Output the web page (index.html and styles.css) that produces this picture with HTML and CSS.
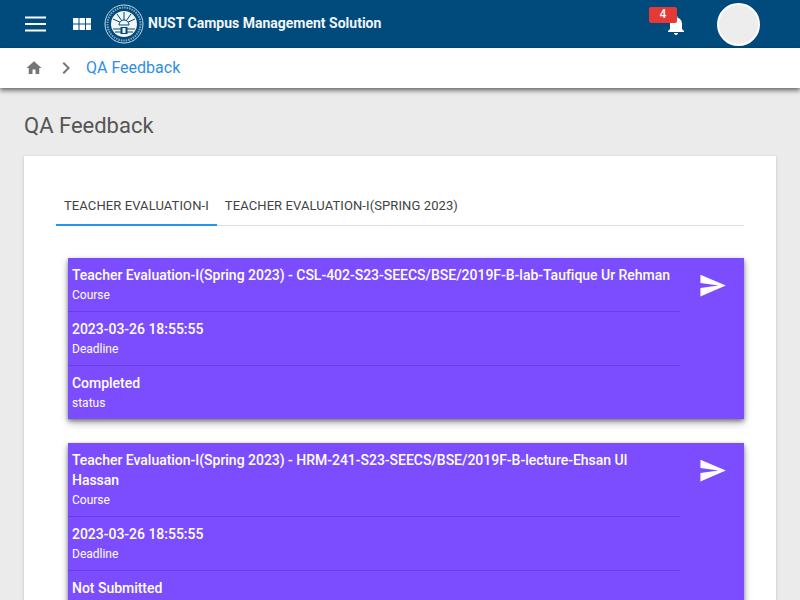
FILE: index.html
```html
<!DOCTYPE html>
<html lang="en">
<head>
<meta charset="utf-8">
<title>QA Feedback</title>
<link rel="stylesheet" href="styles.css">
</head>
<body>
<header class="topbar">
  <svg class="menu-icon" viewBox="0 0 22 16" width="22" height="16"><path d="M0 1.500h21M0 8h21M0 14.500h21" stroke="#fff" stroke-width="2" fill="none"/></svg>
  <svg class="apps-icon" viewBox="0 0 18 14" width="18" height="14"><path fill="#fff" d="M0 1h5.500v5.500H0zM6.500 1H12v5.500H6.500zM13 1h5.500v5.500H13zM0 7.500h5.500V13H0zM6.500 7.500H12V13H6.500zM13 7.500h5.500V13H13z"/></svg>
  <svg class="logo" viewBox="0 0 40 40" width="40" height="40">
    <circle cx="20" cy="20" r="19" fill="none" stroke="#c9dbe7" stroke-width="1"/>
    <circle cx="20" cy="20" r="16.500" fill="none" stroke="#7fa8c4" stroke-width="2" stroke-dasharray="1.500 1"/>
    <circle cx="20" cy="20" r="13" fill="#f2f6f9"/>
    <path d="M9 25h22M11 28h18" stroke="#004b7c" stroke-width="1" fill="none"/>
    <path d="M20 20L20 8M20 20L13 10M20 20L27 10M20 20L9 15M20 20L31 15" stroke="#004b7c" stroke-width="1" fill="none"/>
    <path d="M15 21a5 5 0 0 1 10 0z" fill="#f2f6f9" stroke="#004b7c"/>
    <rect x="16.500" y="23" width="7" height="7" fill="#004b7c"/>
    <rect x="18.500" y="24" width="3" height="5" fill="#f2f6f9"/>
  </svg>
  <span class="brand">NUST Campus Management Solution</span>
  <div class="notify">
    <svg class="bell" viewBox="0 0 24 24" width="24" height="24"><path fill="#fff" d="M12 22c1.100 0 2-.9 2-2h-4c0 1.100.9 2 2 2zm6-6v-5c0-3.100-1.600-5.600-4.500-6.300V4c0-.8-.7-1.500-1.500-1.500s-1.500.7-1.500 1.500v.7C7.600 5.400 6 7.900 6 11v5l-2 2v1h16v-1l-2-2z"/></svg>
    <span class="badge">4</span>
  </div>
  <div class="avatar"></div>
</header>
<nav class="crumbs">
  <svg class="home" viewBox="0 0 24 24" width="18" height="18"><path fill="#757575" d="M10 20v-6h4v6h5v-8h3L12 3 2 12h3v8z"/></svg>
  <svg class="chev" viewBox="0 0 24 24" width="24" height="24"><path fill="#757575" d="M10 6L8.600 7.400 13.200 12l-4.600 4.600L10 18l6-6z"/></svg>
  <span class="crumb-link">QA Feedback</span>
</nav>
<main class="content">
  <h1 class="title">QA Feedback</h1>
  <section class="panel">
    <div class="tabs">
      <div class="tab active">TEACHER EVALUATION-I</div>
      <div class="tab">TEACHER EVALUATION-I(SPRING 2023)</div>
    </div>
    <article class="eval">
      <div class="fields">
        <div class="field"><div class="value">Teacher Evaluation-I(Spring 2023) - CSL-402-S23-SEECS/BSE/2019F-B-lab-Taufique Ur Rehman</div><div class="label">Course</div></div>
        <div class="field"><div class="value">2023-03-26 18:55:55</div><div class="label">Deadline</div></div>
        <div class="field"><div class="value">Completed</div><div class="label">status</div></div>
      </div>
      <svg class="send" viewBox="0 0 24 24" width="29" height="29"><path fill="#fff" d="M2 21l21-9L2 3v7l15 2-15 2z"/></svg>
    </article>
    <article class="eval">
      <div class="fields">
        <div class="field"><div class="value">Teacher Evaluation-I(Spring 2023) - HRM-241-S23-SEECS/BSE/2019F-B-lecture-Ehsan Ul Hassan</div><div class="label">Course</div></div>
        <div class="field"><div class="value">2023-03-26 18:55:55</div><div class="label">Deadline</div></div>
        <div class="field"><div class="value">Not Submitted</div><div class="label">status</div></div>
      </div>
      <svg class="send" viewBox="0 0 24 24" width="29" height="29"><path fill="#fff" d="M2 21l21-9L2 3v7l15 2-15 2z"/></svg>
    </article>
  </section>
</main>
</body>
</html>
```
FILE: styles.css
```css
* { box-sizing: border-box; }
html, body { margin: 0; height: 600px; overflow: hidden; }
body { background: #ebebeb; font-family: Roboto, "Liberation Sans", sans-serif; color: #424242; }

.topbar { height: 48px; background: #004b7c; display: flex; align-items: center; padding-left: 25px; }
.menu-icon { flex: none; }
.apps-icon { flex: none; margin-left: 26px; }
.logo { flex: none; margin-left: 13px; }
.brand { margin-left: 4px; color: #f2f5f8; font-size: 14px; font-weight: 700; position: relative; top: -1px; }
.notify { margin-left: auto; position: relative; width: 24px; height: 24px; margin-top: 2px; }
.bell { display: block; }
.badge { position: absolute; left: -15px; top: -6px; width: 28px; height: 16px; background: #e53935; color: #fff; border-radius: 2px; font-size: 12px; font-weight: 500; text-align: center; line-height: 15px; }
.avatar { width: 43px; height: 43px; margin: 0 40px 0 29px; border-radius: 50%; background: #ededed; border: 2px solid #fff; }

.crumbs { position: relative; height: 40px; background: #fff; display: flex; align-items: center; padding-left: 25px; box-shadow: 0 2px 4px rgba(0,0,0,.45), 0 3px 6px rgba(0,0,0,.2); }
.home { flex: none; }
.chev { flex: none; margin-left: 11px; }
.crumb-link { margin-left: 8px; color: #2e8fe8; font-size: 16px; position: relative; top: -1px; }

.content { padding: 0 24px; }
.title { margin: 0; padding-top: 24px; height: 68px; font-size: 22px; font-weight: 400; line-height: 28px; color: #555; }

.panel { background: #fff; padding: 32px 32px 0; height: 600px; box-shadow: 0 1px 3px rgba(0,0,0,.2); }
.tabs { display: flex; height: 38px; border-bottom: 1px solid #e0e0e0; }
.tab { height: 38px; padding: 0 8px; font-size: 13px; line-height: 35px; color: #424242; letter-spacing: .1px; }
.tab.active { border-bottom: 2px solid #2196f3; }

.eval { margin: 32px 0 24px 12px; display: flex; background: #7c4dff; color: #fff; box-shadow: 0 2px 4px rgba(0,0,0,.4), 0 4px 8px rgba(0,0,0,.25); }
.eval + .eval { margin-top: 0; }
.fields { width: 612px; flex: none; }
.field { padding: 7px 4px 6px; border-bottom: 1px solid #6a3fe0; }
.field:last-child { border-bottom: 0; }
.value { font-size: 14px; font-weight: 500; line-height: 20px; letter-spacing: -.02px; }
.label { font-size: 12px; line-height: 20px; }
.send { flex: none; margin: 13px 0 0 18px; }
```
